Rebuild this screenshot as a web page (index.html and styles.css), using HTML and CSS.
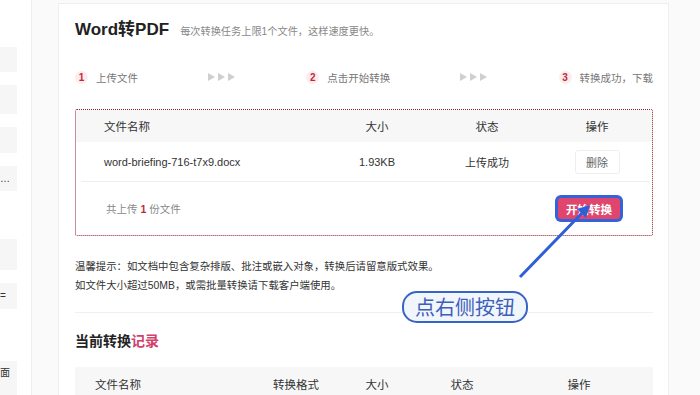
FILE: index.html
```html
<!DOCTYPE html>
<html lang="zh-CN">
<head>
    <meta charset="UTF-8">
    <meta name="viewport" content="width=device-width, initial-scale=1.0">
    <title>Word转PDF</title>
    <link rel="stylesheet" href="styles.css">
</head>
<body>
    <div class="page">
        <aside class="side">
            <div class="side_item first"></div>
            <div class="side_item tall"></div>
            <div class="side_item"></div>
            <div class="side_item"><span class="side_text">…</span></div>
            <div class="side_item gap"></div>
            <div class="side_item"><span class="side_text">=</span></div>
            <div class="side_item last"><span class="side_text">面</span></div>
        </aside>

        <main class="main">
            <section class="card">
                <div class="head">
                    <h1>Word转PDF</h1>
                    <span class="sub">每次转换任务上限1个文件，这样速度更快。</span>
                </div>

                <div class="steps">
                    <div class="step"><span class="num">1</span>上传文件</div>
                    <svg class="more" width="28" height="8" viewBox="0 0 28 8"><polygon points="0,0 7,4 0,8"/><polygon points="10,0 17,4 10,8"/><polygon points="20,0 27,4 20,8"/></svg>
                    <div class="step"><span class="num">2</span>点击开始转换</div>
                    <svg class="more" width="28" height="8" viewBox="0 0 28 8"><polygon points="0,0 7,4 0,8"/><polygon points="10,0 17,4 10,8"/><polygon points="20,0 27,4 20,8"/></svg>
                    <div class="step"><span class="num">3</span>转换成功，下载</div>
                </div>

                <div class="upload">
                    <div class="file_row file_head">
                        <span class="name">文件名称</span>
                        <span>大小</span>
                        <span>状态</span>
                        <span>操作</span>
                    </div>
                    <div class="file_row file_body">
                        <span class="name">word-briefing-716-t7x9.docx</span>
                        <span>1.93KB</span>
                        <span>上传成功</span>
                        <span><button class="del_btn">删除</button></span>
                    </div>
                    <div class="upload_foot">
                        <span class="count">共上传 <b>1</b> 份文件</span>
                        <button class="start_btn">开始转换</button>
                    </div>
                </div>

                <div class="tips">
                    <p>温馨提示：如文档中包含复杂排版、批注或嵌入对象，转换后请留意版式效果。</p>
                    <p>如文件大小超过50MB，或需批量转换请下载客户端使用。</p>
                </div>

                <div class="divider"></div>

                <h2 class="rec_title">当前转换<em>记录</em></h2>

                <div class="rec_head">
                    <span class="name">文件名称</span>
                    <span>转换格式</span>
                    <span>大小</span>
                    <span>状态</span>
                    <span>操作</span>
                </div>
            </section>
        </main>

        <!-- annotation drawn over the page -->
        <svg class="arrow" width="700" height="395" viewBox="0 0 700 395">
            <line x1="520" y1="277" x2="583" y2="212" stroke="#2f5fd6" stroke-width="3"/>
            <polygon points="590,205 586,218 577,209" fill="#2f5fd6"/>
        </svg>
        <div class="callout">点右侧按钮</div>
    </div>
</body>
</html>
```
FILE: styles.css
```css
body {
    margin: 0;
    background: #fafafa;
    font-family: "Liberation Sans", "Noto Sans CJK SC", sans-serif;
    color: #333;
}
.page {
    display: flex;
    height: 395px;
    overflow: hidden;
    position: relative;
}

/* left menu, mostly cut off */
.side {
    width: 31px;
    flex: none;
    background: #fff;
    border-right: 1px solid #efefef;
    display: flex;
    flex-direction: column;
}
.side_item {
    width: 17px;
    height: 27px;
    margin-top: 13px;
    background: #f6f6f6;
    overflow: hidden;
    display: flex;
    align-items: center;
}
.side_item.first { margin-top: 47px; height: 26px; }
.side_item.tall { height: 31px; }
.side_item.gap { margin-top: 48px; height: 32px; }
.side_item.last { margin-top: 52px; height: 30px; align-items: flex-start; padding-top: 6px; }
.side_text {
    font-size: 10px;
    line-height: 12px;
    color: #333;
}

.main {
    padding: 3px 0 0 26px;
}
.card {
    width: 578px;
    height: 400px;
    padding: 14px 15px 0 16px;
    background: #fff;
    border: 1px solid #eee;
    border-bottom: none;
}

.head {
    display: flex;
    align-items: baseline;
    height: 24px;
}
.head h1 {
    margin: 0;
    font-size: 17px;
    line-height: 24px;
    font-weight: 700;
    color: #222;
}
.sub {
    margin-left: 11px;
    font-size: 10.2px;
    color: #888;
}

.steps {
    display: flex;
    justify-content: space-between;
    align-items: center;
    height: 14px;
    margin-top: 28px;
}
.step {
    display: flex;
    align-items: center;
    gap: 8px;
    font-size: 10.5px;
    color: #777;
}
.num {
    width: 13px;
    height: 13px;
    border-radius: 50%;
    background: #fdecec;
    color: #c3283d;
    font-size: 10px;
    font-weight: 700;
    display: flex;
    align-items: center;
    justify-content: center;
}
.more { fill: #cfcfcf; }

.upload {
    margin-top: 25px;
    border: 1px dotted #8e1f30;
    border-radius: 2px;
}
.file_row {
    display: grid;
    grid-template-columns: 1fr 110px 110px 110px;
    align-items: center;
    text-align: center;
}
.file_row .name {
    text-align: left;
    padding-left: 28px;
}
.file_head {
    height: 32px;
    background: #f7f7f7;
    font-size: 11.5px;
    color: #333;
}
.file_body {
    height: 39px;
    font-size: 11px;
    color: #333;
}
.del_btn {
    width: 45px;
    height: 24px;
    border: 1px solid #eee;
    border-radius: 3px;
    background: #fff;
    color: #666;
    font-family: inherit;
    font-size: 11px;
    padding: 0;
}
.upload_foot {
    height: 53px;
    margin: 0 2px 0 5px;
    padding: 0 30px 0 25px;
    border-top: 1px solid #eee;
    display: flex;
    justify-content: space-between;
    align-items: center;
}
.count {
    font-size: 10.5px;
    color: #888;
}
.count b { color: #c3283d; }
.start_btn {
    width: 62px;
    height: 21px;
    border: none;
    border-radius: 3px;
    background: #e0466d;
    color: #fff;
    font-family: inherit;
    font-size: 11.5px;
    font-weight: 700;
    padding: 0;
    box-shadow: 0 0 0 3px #3562d8;
}

.tips {
    margin-top: 21px;
    font-size: 10.4px;
    line-height: 19px;
    color: #333;
}
.tips p { margin: 0; }

.divider {
    margin-top: 17px;
    border-top: 1px solid #f0f0f0;
}
.rec_title {
    margin: 18px 0 0;
    font-size: 14px;
    line-height: 20px;
    font-weight: 700;
    color: #222;
}
.rec_title em {
    font-style: normal;
    color: #d2406c;
}
.rec_head {
    margin-top: 16px;
    height: 34px;
    background: #f7f7f7;
    display: grid;
    grid-template-columns: 182px 78px 84px 86px 148px;
    align-items: center;
    text-align: center;
    font-size: 11.5px;
    color: #333;
}
.rec_head .name {
    text-align: left;
    padding-left: 20px;
}

/* annotation layer */
.arrow {
    position: absolute;
    left: 0;
    top: 0;
    pointer-events: none;
}
.callout {
    position: absolute;
    left: 402px;
    top: 291px;
    width: 122px;
    height: 28px;
    border: 2px solid #3a63c6;
    border-radius: 15px;
    background: #f1f5fc;
    color: #3d5fb8;
    font-family: "Noto Sans CJK SC", sans-serif;
    font-size: 20px;
    line-height: 28px;
    text-align: center;
}
```
